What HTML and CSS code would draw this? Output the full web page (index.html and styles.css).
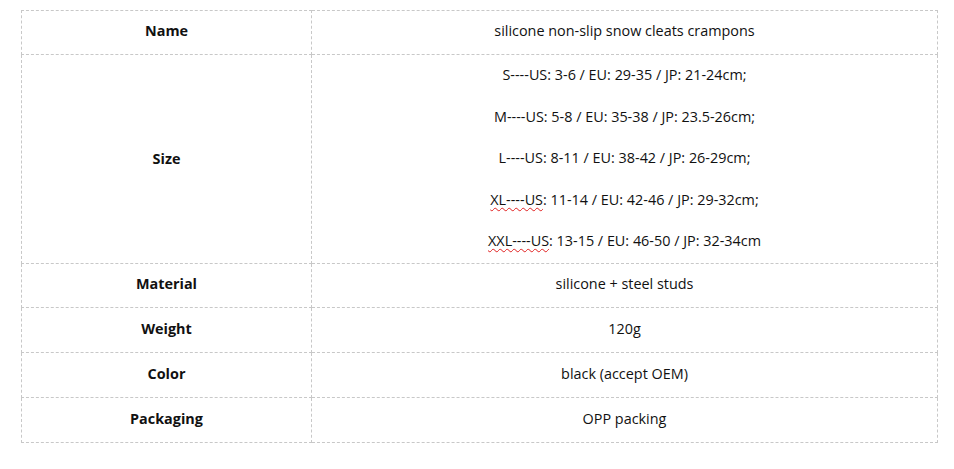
FILE: index.html
```html
<!DOCTYPE html>
<html>
<head>
<meta charset="utf-8">
<link rel="stylesheet" href="styles.css">
</head>
<body>
<table class="spec">
  <tr class="row"><th class="label">Name</th><td class="value">silicone non-slip snow cleats crampons</td></tr>
  <tr class="row-size"><th class="label">Size</th><td class="value"><div class="lines">
    <div class="line">S----US: 3-6 / EU: 29-35 / JP: 21-24cm;</div>
    <div class="line">M----US: 5-8 / EU: 35-38 / JP: 23.5-26cm;</div>
    <div class="line">L----US: 8-11 / EU: 38-42 / JP: 26-29cm;</div>
    <div class="line"><span class="spell">XL----US</span>: 11-14 / EU: 42-46 / JP: 29-32cm;</div>
    <div class="line"><span class="spell">XXL----US</span>: 13-15 / EU: 46-50 / JP: 32-34cm</div>
  </div></td></tr>
  <tr class="row"><th class="label">Material</th><td class="value">silicone + steel studs</td></tr>
  <tr class="row tall"><th class="label">Weight</th><td class="value">120g</td></tr>
  <tr class="row tall"><th class="label">Color</th><td class="value">black (accept OEM)</td></tr>
  <tr class="row tall"><th class="label">Packaging</th><td class="value">OPP packing</td></tr>
</table>
</body>
</html>
```
FILE: styles.css
```css
html, body { margin: 0; padding: 0; background: #fff; }
body { font-family: "Open Sans", "Noto Sans", sans-serif; font-size: 14.4px; color: #111; }
.spec {
  border-collapse: collapse;
  margin: 10px 0 0 21px;
  width: 917px;
  table-layout: fixed;
}
.spec th, .spec td {
  border: 1px dashed #c8c8c8;
  text-align: center;
  vertical-align: middle;
  padding: 0 0 4px 0;
}
.label { width: 289px; font-weight: bold; }
.row th, .row td { height: 39px; }
.row.tall th, .row.tall td { height: 40px; }
.row-size th { height: 206px; padding-bottom: 2px; }
.row-size td { height: 208px; padding: 0; }
.lines { margin: -1px 0 1px 0; }
.line { line-height: 41.6px; }
.spell { text-decoration: underline wavy #e02020; text-decoration-thickness: 1px; text-underline-offset: 2px; }
```
